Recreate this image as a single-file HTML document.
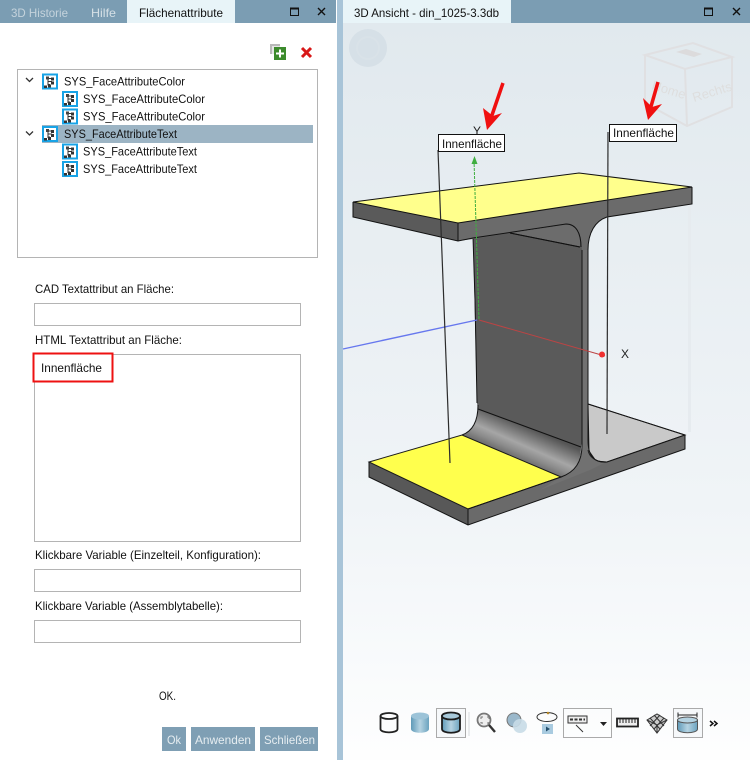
<!DOCTYPE html>
<html><head><meta charset="utf-8"><title>3D Ansicht</title>
<style>html,body{margin:0;padding:0;background:#fff;width:750px;height:760px;overflow:hidden}svg{display:block}text{font-family:"Liberation Sans",sans-serif;font-size:12px;fill:#111}</style></head>
<body>
<svg width="750" height="760" viewBox="0 0 750 760" xmlns="http://www.w3.org/2000/svg">
<defs>
<linearGradient id="bg" x1="0" y1="0" x2="0" y2="1"><stop offset="0" stop-color="#e1e9ee"/><stop offset=".3" stop-color="#e8eef2"/><stop offset=".65" stop-color="#f0f4f7"/><stop offset=".88" stop-color="#f9fbfc"/><stop offset="1" stop-color="#fefefe"/></linearGradient>
<linearGradient id="fil" gradientUnits="userSpaceOnUse" x1="530" y1="428" x2="515" y2="462"><stop offset="0" stop-color="#565656"/><stop offset=".5" stop-color="#a6a6a6"/><stop offset=".72" stop-color="#8a8a8a"/><stop offset="1" stop-color="#5c5c5c"/></linearGradient>
<linearGradient id="cyl" x1="0" y1="0" x2="1" y2="0"><stop offset="0" stop-color="#5f9ab8"/><stop offset=".5" stop-color="#b5d3e2"/><stop offset="1" stop-color="#6ca3bf"/></linearGradient>
<g id="ti">
<rect x="0" y="0" width="16" height="16" fill="#18a3e6"/><rect x="2" y="2" width="12" height="12" fill="#fff"/>
<path d="M6 3v9M6 5h4M6 8h4M6 11h2" stroke="#333" stroke-width="1" fill="none"/>
<rect x="4" y="3" width="3" height="3" fill="#444"/><rect x="9" y="4" width="3" height="3" fill="#333"/><rect x="9" y="8" width="3" height="3" fill="#333"/><rect x="2" y="12" width="3" height="2.500" fill="#333"/><rect x="6" y="11" width="3" height="3" fill="#333"/>
</g>
</defs>

<rect width="750" height="760" fill="#fff"/>

<!-- LEFT PANEL TABS -->
<rect x="0" y="0" width="336" height="23" fill="#7b9db3"/>
<rect x="127" y="0" width="108" height="23" fill="#e8f4f8"/>
<text x="11" y="17" style="fill:#c4d3dc" textLength="57" lengthAdjust="spacingAndGlyphs">3D Historie</text>
<text x="91" y="17" style="fill:#d5e0e6" textLength="25" lengthAdjust="spacingAndGlyphs">Hilfe</text>
<text x="139" y="17" textLength="84" lengthAdjust="spacingAndGlyphs">Flächenattribute</text>
<rect x="290.500" y="8.500" width="8" height="7" fill="none" stroke="#111" stroke-width="1"/><path d="M290 8.500h9" stroke="#111" stroke-width="2"/>
<path d="M318 8l7 7M325 8l-7 7" stroke="#111" stroke-width="1.400"/>
<rect x="337" y="0" width="6" height="760" fill="#a8c4d8"/>

<!-- toolbar icons -->
<rect x="270" y="44" width="10" height="10" fill="#b9b9b9"/><rect x="272" y="46" width="8" height="8" fill="#e6e6e6"/>
<rect x="274" y="47" width="12" height="13" fill="#3c8b2c"/>
<path d="M280 49.500v8M276 53.500h8" stroke="#fff" stroke-width="2"/>
<path d="M302 48l9 9M311 48l-9 9" stroke="#d81818" stroke-width="3"/>

<!-- TREE -->
<rect x="17.500" y="69.500" width="300" height="188" fill="#fff" stroke="#b4b4b4"/>
<rect x="42" y="125" width="271" height="18" fill="#9cb4c4"/>
<path d="M26 78l3.500 3.500 3.500-3.500M26 131.500l3.500 3.500 3.500-3.500" fill="none" stroke="#333" stroke-width="1.300"/>
<use href="#ti" x="42" y="73.500"/><use href="#ti" x="62" y="91"/><use href="#ti" x="62" y="108.500"/>
<use href="#ti" x="42" y="126"/><use href="#ti" x="62" y="143.500"/><use href="#ti" x="62" y="161"/>
<text x="64" y="85.500" textLength="121" lengthAdjust="spacingAndGlyphs">SYS_FaceAttributeColor</text>
<text x="83" y="103" textLength="122" lengthAdjust="spacingAndGlyphs">SYS_FaceAttributeColor</text>
<text x="83" y="120.500" textLength="122" lengthAdjust="spacingAndGlyphs">SYS_FaceAttributeColor</text>
<text x="64" y="138" textLength="113" lengthAdjust="spacingAndGlyphs">SYS_FaceAttributeText</text>
<text x="83" y="155.500" textLength="114" lengthAdjust="spacingAndGlyphs">SYS_FaceAttributeText</text>
<text x="83" y="173" textLength="114" lengthAdjust="spacingAndGlyphs">SYS_FaceAttributeText</text>

<!-- FORM -->
<text x="35" y="293" textLength="139" lengthAdjust="spacingAndGlyphs">CAD Textattribut an Fläche:</text>
<rect x="34.500" y="303.500" width="266" height="22" fill="#fff" stroke="#b4b4b4"/>
<text x="35" y="344" textLength="147" lengthAdjust="spacingAndGlyphs">HTML Textattribut an Fläche:</text>
<rect x="34.500" y="354.500" width="266" height="187" fill="#fff" stroke="#b4b4b4"/>
<rect x="33.500" y="353.500" width="79" height="28" fill="#fff" stroke="#ee1111" stroke-width="2"/>
<text x="41" y="372" textLength="61" lengthAdjust="spacingAndGlyphs">Innenfläche</text>
<text x="35" y="559" textLength="226" lengthAdjust="spacingAndGlyphs">Klickbare Variable (Einzelteil, Konfiguration):</text>
<rect x="34.500" y="569.500" width="266" height="22" fill="#fff" stroke="#b4b4b4"/>
<text x="35" y="610" textLength="188" lengthAdjust="spacingAndGlyphs">Klickbare Variable (Assemblytabelle):</text>
<rect x="34.500" y="620.500" width="266" height="22" fill="#fff" stroke="#b4b4b4"/>
<text x="159" y="700" textLength="17" lengthAdjust="spacingAndGlyphs">OK.</text>
<rect x="162" y="727" width="24" height="24" fill="#7f9fb4"/>
<rect x="191" y="727" width="64" height="24" fill="#7f9fb4"/>
<rect x="260" y="727" width="58" height="24" fill="#7f9fb4"/>
<text x="167" y="744" style="fill:#e6edf1" textLength="14" lengthAdjust="spacingAndGlyphs">Ok</text>
<text x="195" y="744" style="fill:#e6edf1" textLength="56" lengthAdjust="spacingAndGlyphs">Anwenden</text>
<text x="264" y="744" style="fill:#e6edf1" textLength="51" lengthAdjust="spacingAndGlyphs">Schließen</text>

<!-- RIGHT VIEW -->
<rect x="343" y="23" width="407" height="737" fill="url(#bg)"/>
<rect x="343" y="0" width="407" height="23" fill="#7b9db3"/>
<rect x="343" y="0" width="168" height="23" fill="#e8f4f8"/>
<text x="354" y="17" textLength="145" lengthAdjust="spacingAndGlyphs">3D Ansicht - din_1025-3.3db</text>
<rect x="704.500" y="8.500" width="8" height="7" fill="none" stroke="#111"/><path d="M704 8.500h9" stroke="#111" stroke-width="2"/>
<path d="M733 8l7 7M740 8l-7 7" stroke="#111" stroke-width="1.400"/>

<!-- ghost nav -->
<circle cx="368" cy="48" r="19" fill="#d6e0e7"/><circle cx="368" cy="48" r="11" fill="none" stroke="#d9e2e8" stroke-width="2"/>
<g fill="none" stroke="#e0e0e2" stroke-width="2"><path d="M645 55L693 43L732 57L685 69ZM645 55V103L687 126L732 107V57M685 69L687 126"/></g>
<text x="0" y="0" transform="translate(694,102) rotate(-17)" style="fill:#dedede;font-size:13px">Rechts</text>
<text x="0" y="0" transform="translate(651,89) rotate(17)" style="fill:#dedede;font-size:13px">Home</text>
<path d="M676 52l18 5 8-3-16-5z" fill="#dcdbdc"/>
<rect x="688" y="204" width="3" height="228" fill="#e6ebef"/>

<!-- beam: web -->
<path d="M473 236L588 225V405L581 447L478 409L477 403Z" fill="#5a5a5a"/>
<!-- right back flange surface -->
<path d="M588 404L685 435L607 462L596 461L589 451Z" fill="#c9c9c9" stroke="#1a1a1a" stroke-width="1"/>
<!-- bottom flange front -->
<path d="M369 462V477L468 525L685 449V435L607 462C594 463 588 456 588 440V404L582 404V440C582 462 575 472 561 477L468 509Z" fill="#646464"/>
<path d="M369 462L468 509V525L369 477Z" fill="#585858"/>
<path d="M468 509L685 435V449L468 525Z" fill="#6a6a6a"/>
<path d="M582 250V450C582 462 575 472 561 477L540 490L590 470L606 462C594 463 588 456 588 440V250Z" fill="#717171"/>
<!-- fillet band -->
<path d="M478 409L581 447C581 462 575 472 561 477L462 435C473 431 477 421 478 409Z" fill="url(#fil)"/>
<path d="M478 409L581 447" stroke="#111" stroke-width="1" fill="none"/>
<path d="M588 450C589 457 596 462 605 462" stroke="#222" fill="none"/>
<!-- yellow bottom -->
<path d="M369 462L462 435L561 477L468 509Z" fill="#ffff4d" stroke="#1a1a1a" stroke-width="1"/>
<!-- outline bottom -->
<path d="M369 462V477L468 525L685 449V435L588 404M468 509V525M468 509L561 477C575 472 582 462 582 445V250M588 247V440C588 456 594 463 607 462L685 435M478 405C478 421 473 431 462 435" fill="none" stroke="#141414" stroke-width="1"/>
<path d="M473 237L475 300L477 403" fill="none" stroke="#111" stroke-width="1"/>
<!-- top flange under fillets -->
<path d="M510 233L567 224C576 225 581 233 580 247Z" fill="#6c6c6c"/>
<path d="M510 233L580 247" stroke="#111" stroke-width="1" fill="none"/>
<path d="M458 241L473 239L510 233L566 224C576 224 581 233 582 250H588C588 233 595 221 607 217L692 204V187L458 223Z" fill="#6b6b6b"/>
<path d="M353 202V217L458 241V223Z" fill="#5a5a5a"/>
<path d="M353 202L579 173L692 187L458 223Z" fill="#ffff8c"/>
<path d="M353 202L579 173L692 187L458 223ZM353 202V217L458 241L473 238L566 224C576 224 581 233 581 247M458 223V241M692 187V204L607 217C595 221 588 233 588 250M510 233L580 247" fill="none" stroke="#111" stroke-width="1"/>

<!-- axes -->
<path d="M343 349L477 320" stroke="#6677ee" stroke-width="1.400"/>
<path d="M479 320L605 356" stroke="#bb4444" stroke-width="1"/>
<circle cx="602" cy="354.500" r="3" fill="#f03030"/>
<path d="M474 160L479 320" stroke="#3fae3f" stroke-width="1" stroke-dasharray="3 1"/>
<path d="M474.500 156l-3 8h6z" fill="#3fae3f"/>
<text x="473" y="135" style="fill:#222" textLength="8" lengthAdjust="spacingAndGlyphs">Y</text>
<text x="621" y="358" style="fill:#222" textLength="8" lengthAdjust="spacingAndGlyphs">X</text>

<!-- leaders -->
<path d="M438 150L450 463" stroke="#2c2c2c" stroke-width="1.200"/>
<path d="M608 132L607 434" stroke="#2c2c2c" stroke-width="1.200"/>
<!-- labels -->
<rect x="438.500" y="134.500" width="66" height="17" fill="#fff" stroke="#111"/>
<text x="442" y="148" textLength="60" lengthAdjust="spacingAndGlyphs">Innenfläche</text>
<rect x="609.500" y="124.500" width="67" height="17" fill="#fff" stroke="#111"/>
<text x="613" y="137" textLength="61" lengthAdjust="spacingAndGlyphs">Innenfläche</text>
<!-- red arrows -->
<path d="M503 83L491 118" stroke="#f01010" stroke-width="3.500" fill="none"/>
<path d="M483 108L487 130L502 113L493 116Z" fill="#f01010"/>
<path d="M658 82L650 110" stroke="#f01010" stroke-width="3.500" fill="none"/>
<path d="M643 98L648 120L662 104L652 107Z" fill="#f01010"/>

<!-- BOTTOM TOOLBAR -->
<g fill="none" stroke="#222" stroke-width="1.800">
<ellipse cx="389" cy="716" rx="8.500" ry="3"/><path d="M380.500 716v13c0 4.500 17 4.500 17 0v-13"/>
</g>
<path d="M411 716v13c0 5 18 5 18 0v-13z" fill="url(#cyl)"/><ellipse cx="420" cy="716" rx="9" ry="3.500" fill="#9cc3d8"/>
<rect x="436.500" y="708.500" width="29" height="29" fill="#f6f8fa" stroke="#aaa"/>
<path d="M442 716v13c0 5 18 5 18 0v-13z" fill="url(#cyl)" stroke="#1c1c1c" stroke-width="1.800"/><ellipse cx="451" cy="716" rx="9" ry="3.500" fill="#a8c9da" stroke="#1c1c1c" stroke-width="1.800"/>
<path d="M469 712V736" stroke="#d8dcdf"/>
<circle cx="484" cy="720" r="6.500" fill="#eee" stroke="#777" stroke-width="1.800"/><path d="M489 725l6 7" stroke="#333" stroke-width="2.400"/>
<path d="M481 719v-2h2M487 717h2v2M489 722v1h-2M483 723h-2v-1" stroke="#777" fill="none"/>
<circle cx="514" cy="720" r="7" fill="#9ab8cb" stroke="#777"/><circle cx="520" cy="726" r="7" fill="#c8dce7" opacity=".9"/>
<ellipse cx="547" cy="717" rx="10" ry="4.500" fill="none" stroke="#333"/><circle cx="548" cy="713" r="1.300" fill="#b5882a"/>
<rect x="542" y="724" width="11" height="10" fill="#a9cbe0"/><path d="M546 726.500l4 2.500-4 2.500z" fill="#24506e"/>
<rect x="563.500" y="708.500" width="48" height="29" fill="none" stroke="#aaa"/>
<rect x="568" y="716" width="19" height="7" fill="#eee" stroke="#333"/><path d="M570 719.500h15" stroke="#333" stroke-dasharray="3 1.500" stroke-width="2"/><path d="M576 725l7 7" stroke="#333"/>
<path d="M600 722h7l-3.500 4z" fill="#222"/>
<rect x="617" y="718.500" width="21" height="8" fill="#eee" stroke="#222" stroke-width="1.800"/><path d="M620 719v4M623 719v4M626 719v4M629 719v4M632 719v4M635 719v4" stroke="#222"/>
<path d="M647 720L657 714L667 720L657 733Z" fill="#ccc" stroke="#333"/><path d="M650 718L660 729M654 715L664 726M664 718L654 729M660 715L650 726M647 720L657 725L667 720M657 725V733" stroke="#333" fill="none"/>
<rect x="673.500" y="708.500" width="29" height="29" fill="#f6f8fa" stroke="#aaa"/>
<path d="M678 715h19M678 712.500v5M697 712.500v5" stroke="#222" fill="none"/>
<path d="M677.500 720v9c0 5 20 5 20 0v-9z" fill="url(#cyl)" stroke="#555"/><ellipse cx="687.500" cy="720" rx="10" ry="3" fill="#b5d3e2" stroke="#555"/>
<path d="M710 721l3 2.500-3 2.500M714 721l3 2.500-3 2.500" fill="none" stroke="#111" stroke-width="1.500"/>
</svg>
</body></html>
